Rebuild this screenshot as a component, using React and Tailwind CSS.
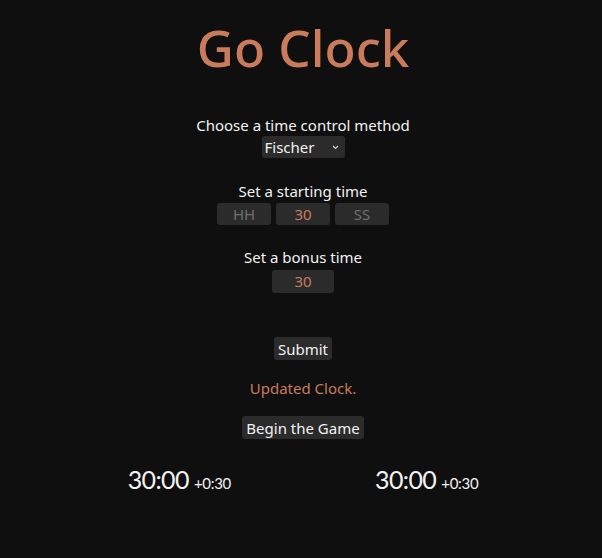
export default function App() {
  return (
    <div
      className="min-h-[558px] bg-[#0f0f0f] text-[#f2f2f2] flex flex-col items-center pl-[4px]"
      style={{ fontFamily: '"Noto Sans", "Open Sans", sans-serif' }}
    >
      <h1 className="mt-[12px] text-[51px] leading-[70px] font-medium text-[#c97b5c]">Go Clock</h1>

      <p className="mt-[33px] text-[15px] leading-[20px]">Choose a time control method</p>
      <div className="mt-[1px] w-[83px] h-[22px] rounded-[3px] bg-[#2b2b2b] flex items-center justify-between pl-[3px] pr-[6px]">
        <span className="text-[15px] leading-[20px]">Fischer</span>
        <svg width="7" height="5" viewBox="0 0 7 5" fill="none" stroke="#cfcfcf" strokeWidth="1.2">
          <path d="M1 1l2.5 2.5L6 1" />
        </svg>
      </div>

      <p className="mt-[23px] text-[15px] leading-[20px]">Set a starting time</p>
      <div className="mt-[2px] flex gap-[5px]">
        <div className="w-[54px] h-[22px] rounded-[3px] bg-[#2b2b2b] flex items-center justify-center text-[15px] text-[#6e6e6e]">HH</div>
        <div className="w-[54px] h-[22px] rounded-[3px] bg-[#2b2b2b] flex items-center justify-center text-[15px] text-[#c97b5c]">30</div>
        <div className="w-[54px] h-[22px] rounded-[3px] bg-[#2b2b2b] flex items-center justify-center text-[15px] text-[#6e6e6e]">SS</div>
      </div>

      <p className="mt-[22px] text-[15px] leading-[20px]">Set a bonus time</p>
      <div className="mt-[3px] w-[62px] h-[23px] rounded-[3px] bg-[#2b2b2b] flex items-center justify-center text-[15px] text-[#c97b5c]">30</div>

      <button className="mt-[44px] h-[23px] px-[4px] rounded-[3px] bg-[#2b2b2b] text-[15px] leading-[20px]">Submit</button>

      <p className="mt-[18px] text-[15px] leading-[20px] text-[#c97b5c]">Updated Clock.</p>

      <button className="mt-[18px] h-[23px] px-[4px] rounded-[3px] bg-[#2b2b2b] text-[15px] leading-[20px]">Begin the Game</button>

      <div className="mt-[22px] flex justify-center gap-[144px]" style={{ fontFamily: 'Lato, sans-serif' }}>
        <div className="flex items-baseline gap-[5px]">
          <span className="text-[25px] tracking-[-0.6px]">30:00</span>
          <span className="text-[15px] tracking-[-0.3px]">+0:30</span>
        </div>
        <div className="flex items-baseline gap-[5px]">
          <span className="text-[25px] tracking-[-0.6px]">30:00</span>
          <span className="text-[15px] tracking-[-0.3px]">+0:30</span>
        </div>
      </div>
    </div>
  );
}
